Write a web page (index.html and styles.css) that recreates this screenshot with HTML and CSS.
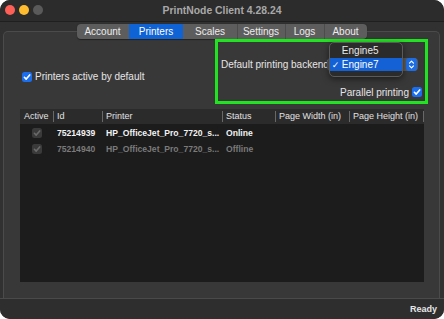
FILE: index.html
```html
<!DOCTYPE html>
<html>
<head>
<meta charset="utf-8">
<title>PrintNode Client</title>
<link rel="stylesheet" href="styles.css">
</head>
<body>
<div class="window">
  <div class="titlebar">
    <div class="lights">
      <span class="light red"></span>
      <span class="light yellow"></span>
      <span class="light grey"></span>
    </div>
    <div class="title">PrintNode Client 4.28.24</div>
    <div></div>
  </div>
  <div class="main">
    <div class="tabview">
      <div class="tabs">
        <div class="tab">Account</div>
        <div class="tab active">Printers</div>
        <div class="tab">Scales</div>
        <div class="tab">Settings</div>
        <div class="tab">Logs</div>
        <div class="tab">About</div>
      </div>
      <div class="top-row">
        <div class="default-active">
          <span class="checkbox on"><svg viewBox="0 0 10 10"><path d="M2.4 5.3 L4.2 7.1 L7.7 2.9" /></svg></span>
          <span>Printers active by default</span>
        </div>
        <div class="highlight">
          <div class="backend-row">
            <span class="backend-label">Default printing backend</span>
            <div class="popup">
              <span class="popup-text">Engine7</span>
              <span class="stepper"><svg viewBox="0 0 11 13"><path d="M3.5 5.2 L5.5 3.2 L7.5 5.2 M3.5 7.8 L5.5 9.8 L7.5 7.8" /></svg></span>
              <div class="menu">
                <div class="menu-item">Engine5</div>
                <div class="menu-item selected"><span class="tick">✓</span>Engine7</div>
              </div>
            </div>
          </div>
          <div class="parallel">
            <span>Parallel printing</span>
            <span class="checkbox on"><svg viewBox="0 0 10 10"><path d="M2.4 5.3 L4.2 7.1 L7.7 2.9" /></svg></span>
          </div>
        </div>
      </div>
      <div class="table">
        <div class="thead">
          <div class="th first">Active</div>
          <div class="th">Id</div>
          <div class="th">Printer</div>
          <div class="th">Status</div>
          <div class="th">Page Width (in)</div>
          <div class="th last">Page Height (in)</div>
        </div>
        <div class="tbody">
          <div class="row">
            <div class="td center"><span class="checkbox disabled"><svg viewBox="0 0 10 10"><path d="M2.4 5.3 L4.2 7.1 L7.7 2.9" /></svg></span></div>
            <div class="td">75214939</div>
            <div class="td">HP_OfficeJet_Pro_7720_s...</div>
            <div class="td">Online</div>
            <div class="td"></div>
            <div class="td"></div>
          </div>
          <div class="row offline">
            <div class="td center"><span class="checkbox disabled"><svg viewBox="0 0 10 10"><path d="M2.4 5.3 L4.2 7.1 L7.7 2.9" /></svg></span></div>
            <div class="td">75214940</div>
            <div class="td">HP_OfficeJet_Pro_7720_s...</div>
            <div class="td">Offline</div>
            <div class="td"></div>
            <div class="td"></div>
          </div>
        </div>
      </div>
    </div>
  </div>
  <div class="statusbar">Ready</div>
</div>
</body>
</html>
```

FILE: styles.css
```css
* {
  box-sizing: border-box;
  margin: 0;
  padding: 0;
}

html, body {
  background: #ffffff;
  width: 444px;
  height: 319px;
  overflow: hidden;
}

body {
  font-family: "Liberation Sans", Arial, sans-serif;
}

.window {
  width: 444px;
  height: 319px;
  border-radius: 10px;
  overflow: hidden;
  background: #313131;
  display: flex;
  flex-direction: column;
  color: #e6e6e6;
  font-size: 10px;
}

.titlebar {
  flex: none;
  height: 22px;
  display: grid;
  grid-template-columns: 1fr auto 1fr;
  align-items: center;
  background: #2c2c2c;
  border-bottom: 1px solid #1f1f1f;
}

.lights {
  display: flex;
  gap: 4px;
  padding-left: 5px;
  margin-top: -1px;
}

.light {
  width: 10px;
  height: 10px;
  border-radius: 50%;
}

.light.red { background: #fe5f57; }
.light.yellow { background: #febc2e; }
.light.grey { background: #5a5a5a; }

.title {
  font-weight: bold;
  font-size: 10.4px;
  color: #a8a8a8;
  white-space: nowrap;
}

.main {
  flex: 1;
  display: flex;
  flex-direction: column;
  padding: 9px 4px 0 3px;
}

.tabview {
  flex: 1;
  display: flex;
  flex-direction: column;
  background: #383838;
  border: 1px solid #4b4b4b;
  border-bottom: none;
  border-radius: 5px 5px 0 0;
}

.tabs {
  display: grid;
  grid-template-columns: 52px 54px 54px 48px 39px 43px;
  height: 15px;
  margin: -8px auto 0;
  background: #5d5d5d;
  border-radius: 4px;
  overflow: hidden;
  box-shadow: 0 0.5px 1px rgba(0, 0, 0, 0.4);
}

.tab {
  display: flex;
  align-items: center;
  justify-content: center;
  color: #ececec;
  border-left: 1px solid #4c4c4c;
  white-space: nowrap;
}

.tab:first-child { border-left: none; }

.tab.active {
  background: #0f63d5;
  border-left-color: #0f63d5;
  color: #ffffff;
}

.tab.active + .tab { border-left-color: #5d5d5d; }

.top-row {
  display: flex;
  align-items: flex-start;
}

.default-active {
  display: flex;
  align-items: center;
  gap: 3px;
  margin: 32px 0 0 18px;
  white-space: nowrap;
}

.checkbox {
  flex: none;
  width: 10px;
  height: 10px;
  border-radius: 2.5px;
  display: flex;
}

.checkbox svg {
  width: 10px;
  height: 10px;
}

.checkbox path {
  fill: none;
  stroke: #ffffff;
  stroke-width: 1.6;
  stroke-linecap: round;
  stroke-linejoin: round;
}

.checkbox.on { background: #1b6fee; }

.checkbox.disabled { background: #3a3a3a; }
.checkbox.disabled path { stroke: #6a6a6a; }

.highlight {
  margin-left: auto;
  margin-right: 11px;
  width: 213px;
  height: 65px;
  border: 3px solid #22e322;
  display: flex;
  flex-direction: column;
}

.backend-row {
  display: flex;
  align-items: center;
  height: 13px;
  margin-top: 16px;
  padding-left: 3px;
}

.backend-label {
  flex: none;
  white-space: nowrap;
}

.popup {
  position: relative;
  flex: none;
  width: 91px;
  height: 13px;
  margin-left: -2px;
  background: #5b5b5b;
  border-radius: 4px;
  display: flex;
  align-items: center;
  justify-content: space-between;
  padding: 0 1px 0 15px;
}

.stepper {
  width: 11px;
  height: 13px;
  background: #1d6ee6;
  border-radius: 3px;
  display: flex;
}

.stepper svg {
  width: 11px;
  height: 13px;
}

.stepper path {
  fill: none;
  stroke: #ffffff;
  stroke-width: 1.2;
  stroke-linecap: round;
  stroke-linejoin: round;
}

.menu {
  position: absolute;
  left: 2px;
  top: -16px;
  width: 74px;
  height: 35px;
  background: #2b2b2b;
  border: 1px solid #5a5a5a;
  border-radius: 5px;
  box-shadow: 0 2px 6px rgba(0, 0, 0, 0.5);
  overflow: hidden;
}

.menu-item {
  height: 15px;
  display: flex;
  align-items: center;
  padding-left: 12px;
  color: #e8e8e8;
}

.menu-item.selected {
  height: 13px;
  padding-left: 2px;
  background: #1461d6;
  color: #ffffff;
}

.tick {
  width: 10px;
  font-family: "DejaVu Sans", sans-serif;
  font-size: 9px;
}

.parallel {
  display: flex;
  justify-content: flex-end;
  align-items: center;
  gap: 3px;
  height: 10px;
  margin-top: 16px;
  padding-right: 3px;
  white-space: nowrap;
}

.table {
  flex: 1;
  margin: 5px 15px 16px 16px;
  background: #1c1c1c;
  display: flex;
  flex-direction: column;
  font-size: 9px;
}

.thead,
.row {
  display: grid;
  grid-template-columns: 33px 49px 120px 53px 74px 75px;
}

.thead {
  height: 15px;
  padding: 2px 0;
  background: #2b2b2b;
}

.th {
  border-left: 1px solid #686868;
  padding-left: 3px;
  line-height: 11px;
  color: #e2e2e2;
  white-space: nowrap;
  overflow: hidden;
}

.th.first {
  border-left: none;
  padding-left: 4px;
}

.th.last { border-right: 1px solid #686868; }

.tbody { padding-top: 1px; }

.row {
  height: 16px;
  align-items: center;
  font-weight: bold;
  font-size: 8.6px;
  color: #f2f2f2;
}

.row.offline { color: #7a7a7a; }

.td {
  padding-left: 4px;
  white-space: nowrap;
  overflow: hidden;
}

.td.center {
  display: flex;
  justify-content: center;
  padding-left: 0;
}

.statusbar {
  flex: none;
  height: 21px;
  border-top: 1px solid #4a4a4a;
  background: #2e2e2e;
  display: flex;
  justify-content: flex-end;
  align-items: center;
  padding-right: 7px;
  font-size: 9px;
  font-weight: bold;
  color: #e6e6e6;
}
```
